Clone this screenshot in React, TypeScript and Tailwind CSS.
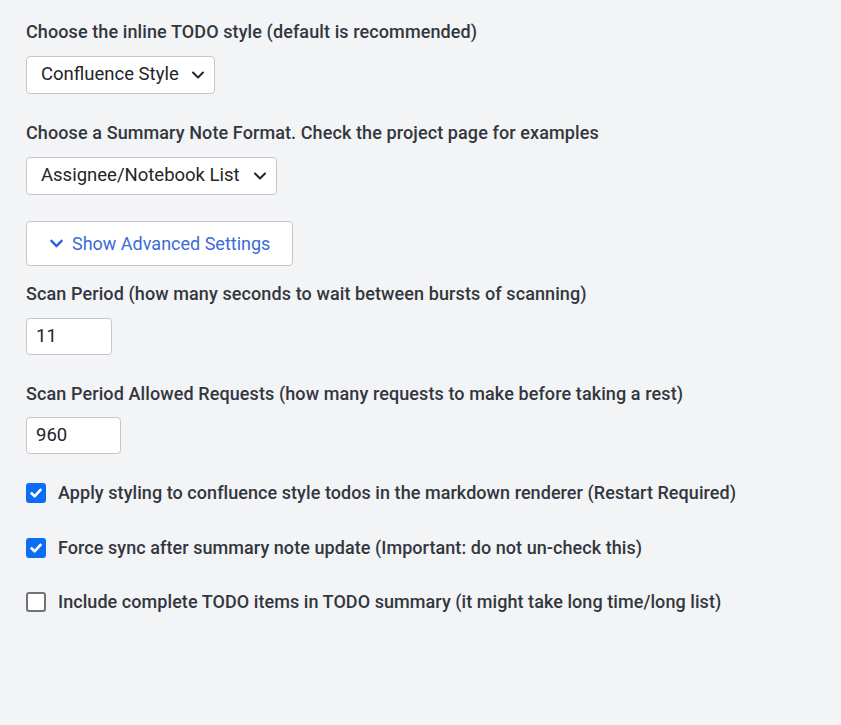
import { ChevronDown } from "lucide-react";
import { FaChevronDown } from "react-icons/fa";

function Select(props: { value: string; width: string }) {
  return (
    <div className={`${props.width} h-[38px] bg-white border border-[#c4c6ca] rounded-[4px] flex items-center justify-between pl-[14px] pr-[6px] text-[18.5px] text-[#222529]`}>
      <span>{props.value}</span>
      <ChevronDown size={20} strokeWidth={2.4} />
    </div>
  );
}

function NumberInput(props: { value: string; width: string }) {
  return (
    <div className={`${props.width} h-[37px] bg-white border border-[#c4c6ca] rounded-[4px] flex items-center pl-[9px] text-[18.5px] text-[#222529]`}>
      {props.value}
    </div>
  );
}

function Check(props: { checked?: boolean; label: string }) {
  return (
    <label className="flex items-center gap-[12px] h-[24px]">
      {props.checked ? (
        <span className="w-[20px] h-[20px] rounded-[3px] bg-[#0b6cf5] flex items-center justify-center">
          <svg width="14" height="14" viewBox="0 0 14 14" fill="none">
            <path d="M2.5 7.3 L5.6 10.3 L11.5 3.8" stroke="white" strokeWidth="2.6" strokeLinecap="round" strokeLinejoin="round" />
          </svg>
        </span>
      ) : (
        <span className="w-[20px] h-[20px] rounded-[3px] bg-white border-2 border-[#6f7378]" />
      )}
      <span className="text-[18px] font-medium text-[#32373f] leading-[24px] tracking-[0.06px]">{props.label}</span>
    </label>
  );
}

export default function App() {
  return (
    <div className="w-[841px] h-[725px] bg-[#f3f4f6] pl-[26px] pt-[20px] font-['Roboto',sans-serif]">
      <p className="text-[18px] font-medium text-[#32373f] leading-[24px] tracking-[0.1px]">Choose the inline TODO style (default is recommended)</p>
      <div className="mt-[12px]">
        <Select value="Confluence Style" width="w-[189px]" />
      </div>

      <p className="mt-[27px] text-[18px] font-medium text-[#32373f] leading-[24px] tracking-[0.1px]">Choose a Summary Note Format. Check the project page for examples</p>
      <div className="mt-[12px]">
        <Select value="Assignee/Notebook List" width="w-[251px]" />
      </div>

      <button className="mt-[26px] w-[267px] h-[45px] bg-white border border-[#c4c6ca] rounded-[4px] flex items-center gap-[8px] pl-[22px] text-[18px] text-[#3c6ad6]">
        <FaChevronDown size={15} className="text-[#2f62d8]" />
        <span>Show Advanced Settings</span>
      </button>

      <p className="mt-[16px] text-[18px] font-medium text-[#32373f] leading-[24px] tracking-[0.1px]">Scan Period (how many seconds to wait between bursts of scanning)</p>
      <div className="mt-[12px]">
        <NumberInput value="11" width="w-[86px]" />
      </div>

      <p className="mt-[27px] text-[18px] font-medium text-[#32373f] leading-[24px] tracking-[0.1px]">Scan Period Allowed Requests (how many requests to make before taking a rest)</p>
      <div className="mt-[11px]">
        <NumberInput value="960" width="w-[95px]" />
      </div>

      <div className="mt-[27px] flex flex-col gap-[30.5px]">
        <Check checked label="Apply styling to confluence style todos in the markdown renderer (Restart Required)" />
        <Check checked label="Force sync after summary note update (Important: do not un-check this)" />
        <Check label="Include complete TODO items in TODO summary (it might take long time/long list)" />
      </div>
    </div>
  );
}
